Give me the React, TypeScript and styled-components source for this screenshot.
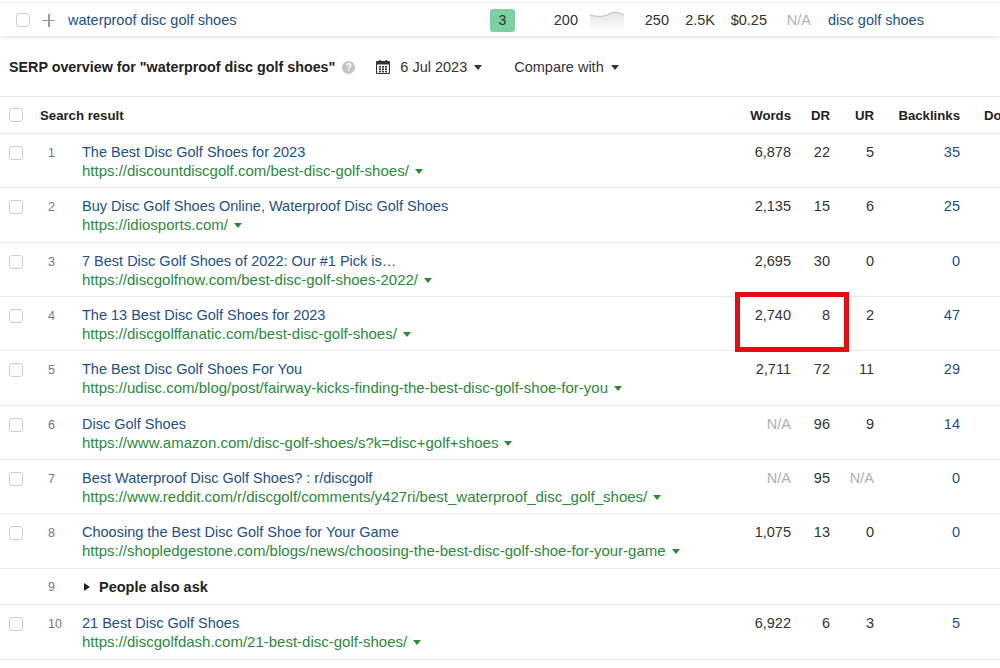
import React from "react";
import styled, { createGlobalStyle } from "styled-components";

const Global = createGlobalStyle`
  html, body { margin: 0; padding: 0; background: #fff; }
  body { font-family: "Liberation Sans", Arial, Helvetica, sans-serif; color: #333; overflow: hidden; width: 1000px; height: 668px; }
  * { box-sizing: border-box; }
`;

const Page = styled.div`
  width: 1000px;
  height: 668px;
  overflow: hidden;
  position: relative;
`;

const TopBar = styled.div`
  margin-top: 2px;
  height: 34px;
  border-top: 1px solid #ececec;
  box-shadow: 0 2px 3px rgba(0, 0, 0, 0.09);
  display: flex;
  align-items: center;
  padding: 1px 0 0 16px;
  font-size: 14.5px;
  background: #fff;
`;

const Check = styled.span`
  display: inline-block;
  width: 14px;
  height: 14px;
  border: 1px solid #cfcfcf;
  border-radius: 3px;
  background: #fff;
  flex: none;
`;

const Plus = styled.span`
  margin-left: 12px;
  width: 13px;
  height: 13px;
  position: relative;
  flex: none;
  &::before, &::after {
    content: "";
    position: absolute;
    background: #9a9a9a;
  }
  &::before { left: 6px; top: 0; width: 1.5px; height: 13px; }
  &::after { top: 6px; left: 0; height: 1.5px; width: 13px; }
`;

const Keyword = styled.span`
  margin-left: 13px;
  width: 422px;
  color: #1d4f8c;
`;

const Badge = styled.span`
  width: 25px;
  height: 23px;
  border-radius: 3px;
  background: #7fcfa2;
  color: #24352b;
  display: flex;
  align-items: center;
  justify-content: center;
  font-size: 14px;
  flex: none;
`;

const Cell = styled.span<{ $w: number; $muted?: boolean }>`
  width: ${(p) => p.$w}px;
  text-align: right;
  flex: none;
  color: ${(p) => (p.$muted ? "#b3b3b3" : "#333")};
`;

const Spark = styled.svg`
  margin-left: 12px;
  flex: none;
`;

const ParentTopic = styled.span`
  margin-left: 17px;
  color: #1d4f8c;
`;

const TitleRow = styled.div`
  height: 60px;
  display: flex;
  align-items: center;
  padding: 2px 0 0 9px;
  font-size: 14.5px;
`;

const TitleText = styled.span`
  font-weight: bold;
  color: #222;
  font-size: 14.3px;
`;

const Help = styled.span`
  margin-left: 7px;
  width: 13px;
  height: 13px;
  border-radius: 50%;
  background: #c4c4c4;
  color: #fff;
  font-size: 10px;
  font-weight: bold;
  display: flex;
  align-items: center;
  justify-content: center;
`;

const Dropdown = styled.span<{ $ml: number }>`
  margin-left: ${(p) => p.$ml}px;
  display: flex;
  align-items: center;
  color: #333;
`;

const DateLabel = styled.span`
  margin-left: 10px;
`;

const Caret = styled.svg`
  margin-left: 7px;
`;

const Table = styled.div`
  border-top: 1px solid #e6e6e6;
`;

const COLS = "40px 42px 638px 80px 39px 44px 86px 100px";

const HeadRow = styled.div`
  display: grid;
  grid-template-columns: ${COLS};
  height: 37px;
  align-items: center;
  border-bottom: 1px solid #e6e6e6;
  font-size: 13.2px;
  font-weight: bold;
  color: #222;
`;

const HeadCell = styled.span<{ $right?: boolean; $pl?: number; $span?: number }>`
  text-align: ${(p) => (p.$right ? "right" : "left")};
  padding-right: ${(p) => (p.$right ? 9 : 0)}px;
  padding-left: ${(p) => p.$pl ?? 0}px;
  white-space: nowrap;
  display: flex;
  justify-content: ${(p) => (p.$right ? "flex-end" : "flex-start")};
  align-items: center;
  grid-column: span ${(p) => p.$span ?? 1};
`;

const Row = styled.div<{ $h: number }>`
  display: grid;
  grid-template-columns: ${COLS};
  height: ${(p) => p.$h}px;
  border-bottom: 1px solid #e9e9e9;
  font-size: 14.5px;
  position: relative;
  align-items: start;
`;

const CheckCell = styled.div`
  padding: 12px 0 0 9px;
`;

const NumCell = styled.div`
  padding: 11px 0 0 8px;
  font-size: 12.5px;
  color: #777;
  line-height: 17px;
`;

const Result = styled.div`
  padding-top: 9px;
  display: flex;
  flex-direction: column;
  white-space: nowrap;
`;

const ResultTitle = styled.span`
  color: #1d4f8c;
  line-height: 19px;
`;

const ResultUrl = styled.span`
  color: #2b8a3e;
  font-size: 15px;
  line-height: 18px;
  display: flex;
  align-items: center;
`;

const Metric = styled.div<{ $muted?: boolean; $link?: boolean }>`
  padding: 9px 9px 0 0;
  line-height: 19px;
  text-align: right;
  color: ${(p) => (p.$muted ? "#b0b0b0" : p.$link ? "#1d4f8c" : "#333")};
`;

const Paa = styled.div`
  display: flex;
  align-items: center;
  height: 35px;
  font-weight: bold;
  color: #222;
  gap: 9px;
  padding-left: 2px;
`;

const PaaNum = styled.div`
  display: flex;
  align-items: center;
  height: 35px;
  padding-left: 8px;
  font-size: 12.5px;
  color: #777;
`;

const Highlight = styled.div`
  position: absolute;
  left: 735px;
  top: -5px;
  width: 114px;
  height: 60px;
  border: 5px solid #ea0a0f;
  pointer-events: none;
`;

const DownTri = ({ color = "#333", ml = 7 }: { color?: string; ml?: number }) => (
  <svg width="8" height="5" viewBox="0 0 8 5" style={{ marginLeft: ml, flex: "none" }}>
    <path d="M0 0 L8 0 L4 5 Z" fill={color} />
  </svg>
);

type R = { n: number; t: string; u: string; w: string; dr: string; ur: string; bl: string; hl?: boolean };

const rows: R[] = [
  { n: 1, t: "The Best Disc Golf Shoes for 2023", u: "https://discountdiscgolf.com/best-disc-golf-shoes/", w: "6,878", dr: "22", ur: "5", bl: "35" },
  { n: 2, t: "Buy Disc Golf Shoes Online, Waterproof Disc Golf Shoes", u: "https://idiosports.com/", w: "2,135", dr: "15", ur: "6", bl: "25" },
  { n: 3, t: "7 Best Disc Golf Shoes of 2022: Our #1 Pick is…", u: "https://discgolfnow.com/best-disc-golf-shoes-2022/", w: "2,695", dr: "30", ur: "0", bl: "0" },
  { n: 4, t: "The 13 Best Disc Golf Shoes for 2023", u: "https://discgolffanatic.com/best-disc-golf-shoes/", w: "2,740", dr: "8", ur: "2", bl: "47", hl: true },
  { n: 5, t: "The Best Disc Golf Shoes For You", u: "https://udisc.com/blog/post/fairway-kicks-finding-the-best-disc-golf-shoe-for-you", w: "2,711", dr: "72", ur: "11", bl: "29" },
  { n: 6, t: "Disc Golf Shoes", u: "https://www.amazon.com/disc-golf-shoes/s?k=disc+golf+shoes", w: "N/A", dr: "96", ur: "9", bl: "14" },
  { n: 7, t: "Best Waterproof Disc Golf Shoes? : r/discgolf", u: "https://www.reddit.com/r/discgolf/comments/y427ri/best_waterproof_disc_golf_shoes/", w: "N/A", dr: "95", ur: "N/A", bl: "0" },
  { n: 8, t: "Choosing the Best Disc Golf Shoe for Your Game", u: "https://shopledgestone.com/blogs/news/choosing-the-best-disc-golf-shoe-for-your-game", w: "1,075", dr: "13", ur: "0", bl: "0" },
];

const last: R = { n: 10, t: "21 Best Disc Golf Shoes", u: "https://discgolfdash.com/21-best-disc-golf-shoes/", w: "6,922", dr: "6", ur: "3", bl: "5" };

const ResultRow = ({ r, h }: { r: R; h: number }) => (
  <Row $h={h}>
    <CheckCell>
      <Check />
    </CheckCell>
    <NumCell>{r.n}</NumCell>
    <Result>
      <ResultTitle>{r.t}</ResultTitle>
      <ResultUrl>
        {r.u}
        <DownTri color="#2b8a3e" ml={6} />
      </ResultUrl>
    </Result>
    <Metric $muted={r.w === "N/A"}>{r.w}</Metric>
    <Metric $muted={r.dr === "N/A"}>{r.dr}</Metric>
    <Metric $muted={r.ur === "N/A"}>{r.ur}</Metric>
    <Metric $link>{r.bl}</Metric>
    <Metric />
    {r.hl && <Highlight />}
  </Row>
);

const CalendarIcon = () => (
  <svg width="14" height="14" viewBox="0 0 14 14">
    <rect x="3" y="0" width="1.6" height="3" fill="#333" />
    <rect x="9.4" y="0" width="1.6" height="3" fill="#333" />
    <rect x="0.5" y="1.5" width="13" height="12" rx="1" fill="none" stroke="#333" strokeWidth="1.2" />
    <rect x="0.5" y="1.5" width="13" height="3" fill="#333" />
    {[0, 1, 2].map((r) =>
      [0, 1, 2].map((c) => (
        <rect key={`${r}-${c}`} x={3 + c * 3} y={6 + r * 2.4} width="2" height="1.6" fill="#333" />
      ))
    )}
  </svg>
);

export default function App() {
  return (
    <Page>
      <Global />
      <TopBar>
        <Check />
        <Plus />
        <Keyword>waterproof disc golf shoes</Keyword>
        <Badge>3</Badge>
        <Cell $w={63}>200</Cell>
        <Spark width="34" height="18" viewBox="0 0 34 18">
          <defs>
            <linearGradient id="sg" x1="0" y1="0" x2="0" y2="1">
              <stop offset="0" stopColor="#e4e4e4" />
              <stop offset="1" stopColor="#fbfbfb" />
            </linearGradient>
          </defs>
          <path d="M0 4 C8 6 13 6 19 3 C25 0 29 1 34 4 L34 18 L0 18 Z" fill="url(#sg)" />
          <path d="M0 4 C8 6 13 6 19 3 C25 0 29 1 34 4" fill="none" stroke="#bdbdbd" strokeWidth="1" />
        </Spark>
        <Cell $w={45}>250</Cell>
        <Cell $w={46}>2.5K</Cell>
        <Cell $w={52}>$0.25</Cell>
        <Cell $w={44} $muted>N/A</Cell>
        <ParentTopic>disc golf shoes</ParentTopic>
      </TopBar>
      <TitleRow>
        <TitleText>SERP overview for "waterproof disc golf shoes"</TitleText>
        <Help>?</Help>
        <Dropdown $ml={21}>
          <CalendarIcon />
          <DateLabel>6 Jul 2023</DateLabel>
          <Caret width="8" height="5" viewBox="0 0 8 5">
            <path d="M0 0 L8 0 L4 5 Z" fill="#333" />
          </Caret>
        </Dropdown>
        <Dropdown $ml={32}>
          Compare with
          <Caret width="8" height="5" viewBox="0 0 8 5">
            <path d="M0 0 L8 0 L4 5 Z" fill="#333" />
          </Caret>
        </Dropdown>
      </TitleRow>
      <Table>
        <HeadRow>
          <HeadCell $pl={9}>
            <Check />
          </HeadCell>
          <HeadCell $span={2}>Search result</HeadCell>
          <HeadCell $right>Words</HeadCell>
          <HeadCell $right>DR</HeadCell>
          <HeadCell $right>UR</HeadCell>
          <HeadCell $right>Backlinks</HeadCell>
          <HeadCell $pl={15}>Domains</HeadCell>
        </HeadRow>
        {rows.map((r, i) => (
          <ResultRow key={r.n} r={r} h={i % 3 === 1 ? 55 : 54} />
        ))}
        <Row $h={36}>
          <div />
          <PaaNum>9</PaaNum>
          <Paa>
            <svg width="6" height="8" viewBox="0 0 6 8">
              <path d="M0 0 L6 4 L0 8 Z" fill="#222" />
            </svg>
            People also ask
          </Paa>
        </Row>
        <ResultRow r={last} h={55} />
      </Table>
    </Page>
  );
}
